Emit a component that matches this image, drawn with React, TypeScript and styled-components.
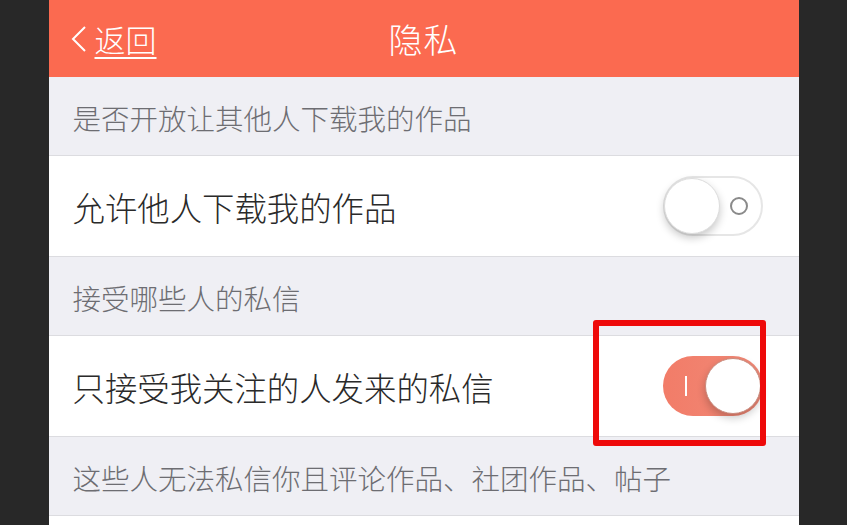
import styled, { createGlobalStyle } from 'styled-components';
import { FunctionComponent } from 'react';

const GlobalStyle = createGlobalStyle`
  html, body {
    margin: 0;
    padding: 0;
    background: #282828;
  }
  body {
    font-family: "Noto Sans CJK SC", "Noto Sans", sans-serif;
  }
`;

const Screen = styled.div`
  width: 750px;
  height: 525px;
  margin: 0 auto;
  background: #ffffff;
  overflow: hidden;
`;

const Header = styled.header`
  height: 77px;
  background: #fb6a50;
  display: grid;
  grid-template-columns: 1fr auto 1fr;
  align-items: center;
  color: #ffffff;
`;

const BackButton = styled.div`
  display: flex;
  align-items: center;
  gap: 7px;
  padding-left: 21px;
  font-size: 31px;
  font-weight: 300;
  line-height: 1;

  span {
    text-decoration: underline;
    text-underline-offset: 5px;
    text-decoration-thickness: 2px;
  }
`;

const Title = styled.h1`
  margin: 0;
  font-size: 34px;
  font-weight: 300;
  letter-spacing: 1px;
`;

const SectionLabel = styled.div`
  height: 79px;
  box-sizing: border-box;
  padding: 3px 0 0 24px;
  display: flex;
  align-items: center;
  background: #efeff4;
  color: #6d6d72;
  font-size: 28.5px;
  font-weight: 300;
  border-bottom: 1px solid #dcdce0;
`;

const Row = styled.div`
  position: relative;
  height: 101px;
  box-sizing: border-box;
  padding: 0 36px 0 24px;
  display: flex;
  align-items: center;
  justify-content: space-between;
  background: #ffffff;
  color: #2a2a2a;
  font-size: 32.4px;
  font-weight: 300;
  border-bottom: 1px solid #dcdce0;
`;

const Track = styled.div<{ $on: boolean }>`
  position: relative;
  width: 100px;
  height: 60px;
  box-sizing: border-box;
  border-radius: 30px;
  border: ${(p) => (p.$on ? 'none' : '2px solid #e6e6e6')};
  background: ${(p) =>
    p.$on ? 'linear-gradient(90deg, #f27c68, #f08a78)' : '#ffffff'};
  display: flex;
  align-items: center;
  justify-content: ${(p) => (p.$on ? 'flex-end' : 'flex-start')};
`;

const Knob = styled.div<{ $on: boolean }>`
  width: 56px;
  height: 56px;
  border-radius: 50%;
  background: #ffffff;
  box-sizing: border-box;
  margin: ${(p) => (p.$on ? '0 2px 0 0' : '0 0 0 -1px')};
  border: ${(p) => (p.$on ? '1.5px solid #c98a7c' : '1px solid #dddddd')};
  box-shadow: 0 4px 8px rgba(0, 0, 0, 0.22);
`;

const OffMark = styled.div`
  position: absolute;
  right: 13px;
  top: 50%;
  width: 14px;
  height: 14px;
  margin-top: -9px;
  border-radius: 50%;
  border: 2px solid #8a8a8a;
`;

const OnMark = styled.div`
  position: absolute;
  left: 22px;
  top: 50%;
  width: 2px;
  height: 20px;
  margin-top: -10px;
  background: #ffffff;
`;

const Highlight = styled.div`
  position: absolute;
  left: 544px;
  top: -16px;
  width: 173px;
  height: 126px;
  box-sizing: border-box;
  border: 6px solid #ee0a0a;
  border-radius: 3px;
`;

const Toggle: FunctionComponent<{ on: boolean }> = ({ on }) => (
  <Track $on={on}>
    {on ? <OnMark /> : <OffMark />}
    <Knob $on={on} />
  </Track>
);

const App: FunctionComponent = () => {
  return (
    <>
      <GlobalStyle />
      <Screen>
        <Header>
          <BackButton>
            <svg width="18" height="30" viewBox="0 0 18 30">
              <path
                d="M15 3 L3 15 L15 27"
                fill="none"
                stroke="#ffffff"
                strokeWidth="2"
              />
            </svg>
            <span>返回</span>
          </BackButton>
          <Title>隐私</Title>
          <div />
        </Header>

        <SectionLabel>是否开放让其他人下载我的作品</SectionLabel>
        <Row>
          允许他人下载我的作品
          <Toggle on={false} />
        </Row>

        <SectionLabel>接受哪些人的私信</SectionLabel>
        <Row>
          只接受我关注的人发来的私信
          <Toggle on={true} />
          <Highlight />
        </Row>

        <SectionLabel>这些人无法私信你且评论作品、社团作品、帖子</SectionLabel>
      </Screen>
    </>
  );
};

export default App;
